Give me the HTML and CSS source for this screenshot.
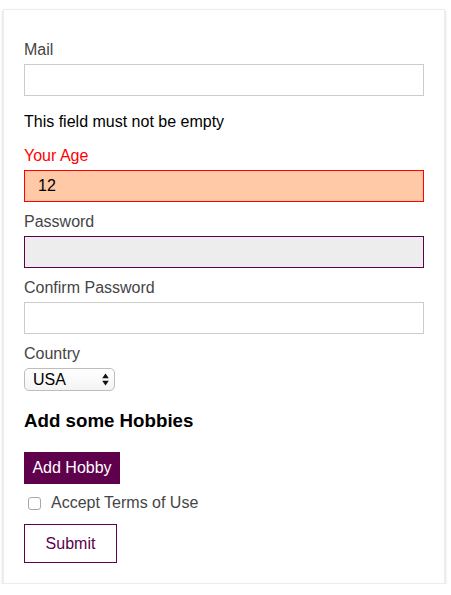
FILE: index.html
```html
<!DOCTYPE html>
<html lang="en">
<head>
<meta charset="utf-8">
<title>Form</title>
<link rel="stylesheet" href="styles.css">
</head>
<body>
<form class="card">
  <label class="label" for="mail">Mail</label>
  <input class="input" id="mail" type="text">
  <p class="error">This field must not be empty</p>

  <label class="label label-invalid" for="age">Your Age</label>
  <input class="input input-invalid" id="age" type="text" value="12">

  <label class="label" for="pw">Password</label>
  <input class="input input-focus" id="pw" type="password">

  <label class="label" for="pw2">Confirm Password</label>
  <input class="input" id="pw2" type="password">

  <label class="label" for="country">Country</label>
  <span class="select-wrap">
    <select class="select" id="country">
      <option>USA</option>
      <option>Canada</option>
    </select>
    <svg class="select-arrows" width="7" height="13" viewBox="0 0 7 13" aria-hidden="true">
      <path d="M3.5 0.5 L6.8 5.2 L0.2 5.2 Z" fill="#111"/>
      <path d="M3.5 12.5 L6.8 7.8 L0.2 7.8 Z" fill="#111"/>
    </svg>
  </span>

  <h3 class="heading">Add some Hobbies</h3>

  <button type="button" class="btn-primary">Add Hobby</button>

  <label class="check-row">
    <input type="checkbox" class="checkbox">
    <span>Accept Terms of Use</span>
  </label>

  <button type="submit" class="btn-outline">Submit</button>
</form>
</body>
</html>
```

FILE: styles.css
```css
html, body {
  margin: 0;
  padding: 0;
  background: #fff;
}

body {
  padding: 9px 0 0 3px;
  font-family: "Liberation Sans", Arial, Helvetica, sans-serif;
  font-size: 16px;
  color: #000;
}

.card {
  box-sizing: border-box;
  width: 442px;
  padding: 31px 20px 20px;
  border: 1px solid #ececec;
  box-shadow: 0 2px 3px rgba(0, 0, 0, 0.2);
  display: flex;
  flex-direction: column;
  align-items: flex-start;
}

.label {
  display: block;
  line-height: 18px;
  margin-bottom: 5px;
  color: #454545;
}

.label-invalid {
  color: #ff0000;
}

.input {
  box-sizing: border-box;
  width: 400px;
  height: 32px;
  margin: 0 0 11px;
  padding: 0 13px;
  border: 1px solid #cccccc;
  border-radius: 0;
  background: #fff;
  font-family: inherit;
  font-size: 16px;
  color: #000;
  outline: none;
}

.input-invalid {
  background: #ffc8a6;
  border-color: #ff0000;
}

.input-focus {
  background: #ededed;
  border-color: #5c004f;
}

.error {
  margin: 6px 0 16px;
  line-height: 18px;
  color: #000;
}

.select-wrap {
  position: relative;
  display: inline-block;
  line-height: 0;
}

.select {
  appearance: none;
  -webkit-appearance: none;
  box-sizing: border-box;
  width: 91px;
  height: 23px;
  margin: 0;
  padding: 0 0 0 8px;
  border: 1px solid #bdbdbd;
  border-radius: 5px;
  background: linear-gradient(#ffffff, #f4f4f4);
  font-family: inherit;
  font-size: 16px;
  line-height: 21px;
  color: #000;
}

.select-arrows {
  position: absolute;
  right: 6px;
  top: 5px;
  pointer-events: none;
}

.heading {
  margin: 19px 0 20px;
  font-size: 18.72px;
  line-height: 22px;
  font-weight: bold;
  color: #000;
}

.btn-primary {
  box-sizing: border-box;
  width: 96px;
  height: 32px;
  margin: 0 0 10px;
  padding: 0;
  border: none;
  border-radius: 0;
  background: #5e004c;
  color: #fff;
  font-family: inherit;
  font-size: 16px;
  line-height: 32px;
  text-align: center;
}

.check-row {
  display: flex;
  align-items: center;
  height: 18px;
  line-height: 18px;
  margin-bottom: 12px;
  color: #454545;
}

.checkbox {
  appearance: none;
  -webkit-appearance: none;
  box-sizing: border-box;
  width: 13px;
  height: 13px;
  margin: 0 10px 0 4px;
  border: 1px solid #a8a8a8;
  border-radius: 3px;
  background: #fff;
}

.btn-outline {
  box-sizing: border-box;
  height: 39px;
  width: 93px;
  margin: 0;
  padding: 0;
  border: 1px solid #5e004c;
  border-radius: 0;
  background: #fff;
  color: #5e004c;
  font-family: inherit;
  font-size: 16px;
}
```
